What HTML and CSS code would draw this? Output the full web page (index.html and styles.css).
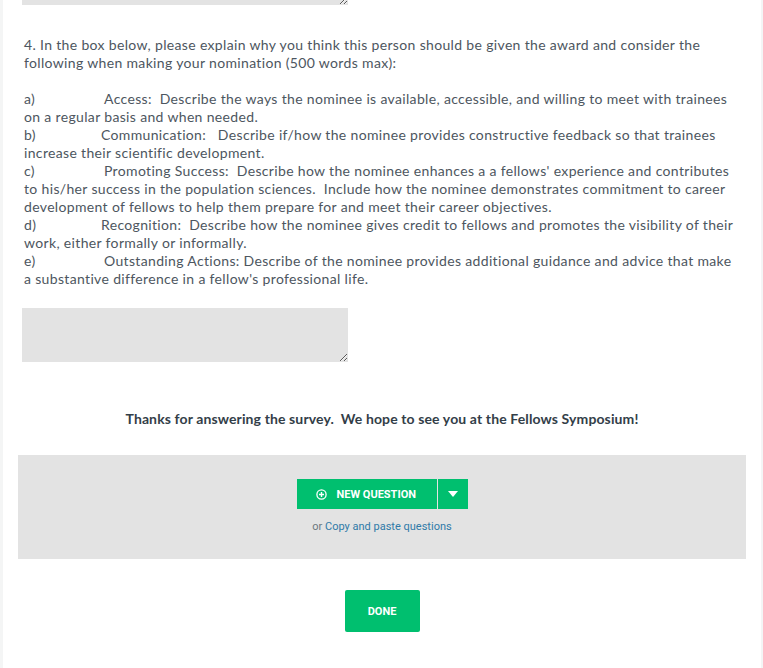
FILE: index.html
```html
<!DOCTYPE html>
<html>
<head>
<meta charset="utf-8">
<link rel="stylesheet" href="styles.css">
</head>
<body>
<div class="page">
  <div class="ta-cut"><textarea class="answer"></textarea></div>

  <div class="question">
    <p class="intro">4. In the box below, please explain why you think this person should be given the award and consider the<br>following when making your nomination (500 words max):</p>
    <p class="items">
      <span class="lbl">a)</span>Access:&nbsp; Describe the ways the nominee is available, accessible, and willing to meet with trainees<br>on a regular basis and when needed.<br>
      <span class="lbl lbl-s">b)</span>Communication:&nbsp;&nbsp; Describe if/how the nominee provides constructive feedback so that trainees<br>increase their scientific development.<br>
      <span class="lbl">c)</span>Promoting Success:&nbsp; Describe how the nominee enhances a a fellows' experience and contributes<br>to his/her success in the population sciences.&nbsp; Include how the nominee demonstrates commitment to career<br>development of fellows to help them prepare for and meet their career objectives.<br>
      <span class="lbl lbl-s">d)</span>Recognition:&nbsp; Describe how the nominee gives credit to fellows and promotes the visibility of their<br>work, either formally or informally.<br>
      <span class="lbl">e)</span>Outstanding Actions: Describe of the nominee provides additional guidance and advice that make<br>a substantive difference in a fellow's professional life.
    </p>
  </div>

  <textarea class="answer"></textarea>

  <p class="thanks">Thanks for answering the survey.&nbsp; We hope to see you at the Fellows Symposium!</p>

  <div class="add-box">
    <div class="split-btn">
      <button class="btn-main">
        <svg class="plus" width="11" height="11" viewBox="0 0 11 11"><circle cx="5.5" cy="5.5" r="4.6" fill="none" stroke="#fff" stroke-width="1.3"/><path d="M5.5 3v5M3 5.5h5" stroke="#fff" stroke-width="1.4"/></svg>
        <span>NEW QUESTION</span>
      </button>
      <button class="btn-drop"><svg width="10" height="6" viewBox="0 0 10 6"><path d="M0 0h10L5 6z" fill="#fff"/></svg></button>
    </div>
    <p class="copy">or <a href="#">Copy and paste questions</a></p>
  </div>

  <div class="done-row"><button class="done">DONE</button></div>
</div>
</body>
</html>
```

FILE: styles.css
```css
html, body {
  margin: 0;
  padding: 0;
  background: #f4f5f5;
}
body {
  font-family: Lato, "Open Sans", sans-serif;
  color: #333e48;
}
.page {
  background: #fff;
  margin: 0 2px 0 3px;
  padding: 0 19px 36px 19px;
}
.ta-cut {
  height: 5px;
  overflow: hidden;
  display: flex;
  flex-direction: column;
  justify-content: flex-end;
}
.answer {
  display: block;
  flex: none;
  width: 326px;
  height: 54px;
  margin: 0;
  padding: 0;
  border: 0;
  background: #e3e3e3;
  resize: both;
  outline: none;
}
.question {
  padding: 31px 0 0 2px;
  font-size: 14px;
  line-height: 18px;
  font-weight: 400;
  letter-spacing: 0.34px;
  color: #4d5660;
  white-space: nowrap;
}
.question p { margin: 0; }
.intro { margin-bottom: 18px !important; }
.lbl {
  display: inline-block;
  width: 80px;
}
.lbl-s { width: 77px; }
.question + .answer { margin-top: 20px; }
.thanks {
  margin: 48px 0 0;
  text-align: center;
  font-size: 14px;
  line-height: 18px;
  font-weight: 700;
  letter-spacing: 0.12px;
  color: #333e48;
}
.add-box {
  margin: 27px -4px 0 -4px;
  background: #e3e3e3;
  height: 104px;
  box-sizing: border-box;
  padding-top: 24px;
  display: flex;
  flex-direction: column;
  align-items: center;
}
.split-btn {
  display: flex;
  height: 30px;
}
.split-btn button {
  border: 0;
  margin: 0;
  background: #00bf6f;
  color: #fff;
  font-family: Roboto, "Liberation Sans", sans-serif;
  cursor: pointer;
}
.btn-main {
  width: 140px;
  display: flex;
  align-items: center;
  padding: 0 0 0 19px;
  gap: 10px;
  font-size: 11px;
  font-weight: 700;
}
.plus { flex: none; }
.btn-drop {
  width: 30px;
  margin-left: 1px !important;
  display: flex;
  align-items: center;
  justify-content: center;
  padding: 0;
}
.copy {
  margin: 11px 0 0;
  font-family: Roboto, "Liberation Sans", sans-serif;
  font-size: 11px;
  line-height: 14px;
  color: #6b787f;
}
.copy a {
  color: #2f7aa8;
  text-decoration: none;
}
.done-row {
  display: flex;
  justify-content: center;
  margin-top: 31px;
}
.done {
  width: 75px;
  height: 42px;
  border: 0;
  border-radius: 2px;
  background: #00bf6f;
  color: #fff;
  font-family: Roboto, "Liberation Sans", sans-serif;
  font-size: 11px;
  font-weight: 700;
  padding: 0;
}
```
